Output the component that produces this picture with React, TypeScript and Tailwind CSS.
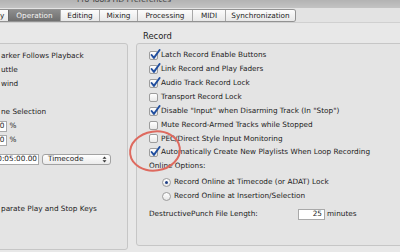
import React from "react";

const tabs = [
  { label: "y", w: "w-[8px]", active: false, left: true },
  { label: "Operation", w: "w-[52px]", active: true },
  { label: "Editing", w: "w-[39px]", active: false },
  { label: "Mixing", w: "w-[38px]", active: false },
  { label: "Processing", w: "w-[55px]", active: false },
  { label: "MIDI", w: "w-[33px]", active: false },
  { label: "Synchronization", w: "w-[70px]", active: false },
];

const recordOpts = [
  { text: "Latch Record Enable Buttons", on: true },
  { text: "Link Record and Play Faders", on: true },
  { text: "Audio Track Record Lock", on: true },
  { text: "Transport Record Lock", on: false },
  { text: 'Disable "Input" when Disarming Track (In "Stop")', on: true },
  { text: "Mute Record-Armed Tracks while Stopped", on: false },
  { text: "PEC/Direct Style Input Monitoring", on: false },
  { text: "Automatically Create New Playlists When Loop Recording", on: true },
];

function Check({ on }: { on: boolean }) {
  return (
    <span className="relative block w-[9px] h-[9px] shrink-0 rounded-[2px] border border-[#9d9d9d] bg-gradient-to-b from-white to-[#e9e9e9]">
      {on && (
        <svg className="absolute left-[0px] top-[-3px]" width="11" height="11" viewBox="0 0 11 11">
          <path d="M1.6 6 L3.9 8.9 L9.6 1" fill="none" stroke="#1f4d9e" strokeWidth="1.9" strokeLinecap="round" strokeLinejoin="round" />
        </svg>
      )}
    </span>
  );
}

function Radio({ on }: { on: boolean }) {
  return (
    <span className="flex items-center justify-center w-[9px] h-[9px] shrink-0 rounded-full border border-[#9d9d9d] bg-gradient-to-b from-white to-[#e6e6e6]">
      {on && <span className="block w-[3px] h-[3px] rounded-full bg-[#1f3f86]" />}
    </span>
  );
}

export default function App() {
  return (
    <div className="relative w-[400px] h-[252px] overflow-hidden bg-[#e8e8e8] text-[#1c1c1c] text-[7.3px] font-['DejaVu_Sans',sans-serif]">
      {/* Title bar (cut off) */}
      <div className="h-[8px] overflow-hidden bg-gradient-to-b from-[#b3b3b3] to-[#c3c3c3]">
        <div className="pl-[77px] mt-[-5px] text-[7.6px] leading-[10px] text-[#3e3e3e] whitespace-nowrap">
          Pro Tools HD Preferences
        </div>
      </div>

      {/* Tab strip */}
      <div className="h-[15px] pt-[1px] bg-[#e3e3e3] border-b border-[#d0d0d0]">
        <div className="flex h-[13px] w-[296px] border border-l-0 border-[#929292] rounded-r-[3px] overflow-hidden">
          {tabs.map((t, i) => (
            <div
              key={i}
              className={
                t.active
                  ? `${t.w} flex items-center justify-center border-l border-[#6a6a6a] bg-gradient-to-b from-[#8d8d8d] to-[#6f6f6f] text-[#f4f4f4] text-[7.3px] leading-none`
                  : t.left
                  ? `${t.w} flex items-center bg-gradient-to-b from-[#fcfcfc] to-[#e8e8e8] text-[7.3px] leading-none`
                  : `${t.w} flex items-center justify-center border-l border-[#a8a8a8] bg-gradient-to-b from-[#fcfcfc] to-[#e8e8e8] text-[7.3px] leading-none`
              }
            >
              {t.label}
            </div>
          ))}
        </div>
      </div>

      {/* Content */}
      <div className="flex gap-[8px] pt-[7px]">
        {/* Left column (cut off) */}
        <div className="ml-[-10px] w-[138px] shrink-0">
          <div className="h-[12px]" />
          <div className="mt-[1px] h-[207px] rounded-[3px] border border-[#c6c6c6] bg-[#e4e4e4] pt-[5px] pl-[10px]">
            <div className="flex items-center h-[14px] whitespace-nowrap">arker Follows Playback</div>
            <div className="flex items-center h-[14px]">uttle</div>
            <div className="flex items-center h-[14px]">wind</div>
            <div className="h-[14px]" />
            <div className="flex items-center h-[14px]">ne Selection</div>
            {[0, 1].map((i) => (
              <div key={i} className="flex items-center h-[14px] gap-[2.5px]">
                <div className="ml-[-12px] w-[18px] h-[11px] flex items-center justify-end pr-[1.5px] bg-white border border-[#a9a9a9]">0</div>
                <span>%</span>
              </div>
            ))}
            <div className="mt-[5px] flex items-center h-[14px] gap-[3px]">
              <div className="ml-[-12px] w-[50px] h-[11px] flex items-center justify-end pr-[1px] bg-white border border-[#a9a9a9] overflow-hidden whitespace-nowrap">
                00:05:00.00
              </div>
              <div className="relative w-[69px] h-[11px] flex items-center pl-[5px] rounded-[3px] border border-[#a2a2a2] bg-gradient-to-b from-white to-[#ebebeb]">
                Timecode
                <svg className="absolute right-[3px] top-[1.5px]" width="5" height="7" viewBox="0 0 5 7">
                  <path d="M0.5 2.8 L2.5 0.6 L4.5 2.8 Z M0.5 4.2 L2.5 6.4 L4.5 4.2 Z" fill="#333" />
                </svg>
              </div>
            </div>
            <div className="mt-[36px] flex items-center h-[14px] whitespace-nowrap">parate Play and Stop Keys</div>
          </div>
        </div>

        {/* Right column */}
        <div className="flex-1 mr-[-12px]">
          <div className="h-[12px] pl-[7px] text-[8.4px] leading-[12px]">Record</div>
          <div className="mt-[1px] h-[203px] rounded-[3px] border border-[#c6c6c6] bg-[#e4e4e4] pt-[5px] pl-[12px]">
            {recordOpts.map((o, i) => (
              <div key={i} className="flex items-center h-[13.85px] gap-[3px] whitespace-nowrap">
                <Check on={o.on} />
                <span>{o.text}</span>
              </div>
            ))}
            <div className="flex items-center h-[14px] pl-[-1px]">Online Options:</div>
            <div className="mt-[2px] ml-[13px]">
              <div className="flex items-center h-[14px] gap-[3px]">
                <Radio on />
                <span>Record Online at Timecode (or ADAT) Lock</span>
              </div>
              <div className="flex items-center h-[14px] gap-[3px]">
                <Radio on={false} />
                <span>Record Online at Insertion/Selection</span>
              </div>
            </div>
            <div className="mt-[4px] flex items-center h-[14px]">
              <span className="w-[149px] shrink-0">DestructivePunch File Length:</span>
              <div className="w-[27px] h-[11px] flex items-center justify-end pr-[2px] bg-white border border-[#a9a9a9]">25</div>
              <span className="ml-[2px]">minutes</span>
            </div>
          </div>
        </div>
      </div>

      {/* Hand-drawn red annotation circle */}
      <svg className="absolute left-[127px] top-[127px]" width="60" height="50" viewBox="0 0 60 50">
        <ellipse cx="28" cy="24" rx="25" ry="19.5" fill="none" stroke="#de6a5f" strokeWidth="2" transform="rotate(-8 28 24)" />
      </svg>
    </div>
  );
}
